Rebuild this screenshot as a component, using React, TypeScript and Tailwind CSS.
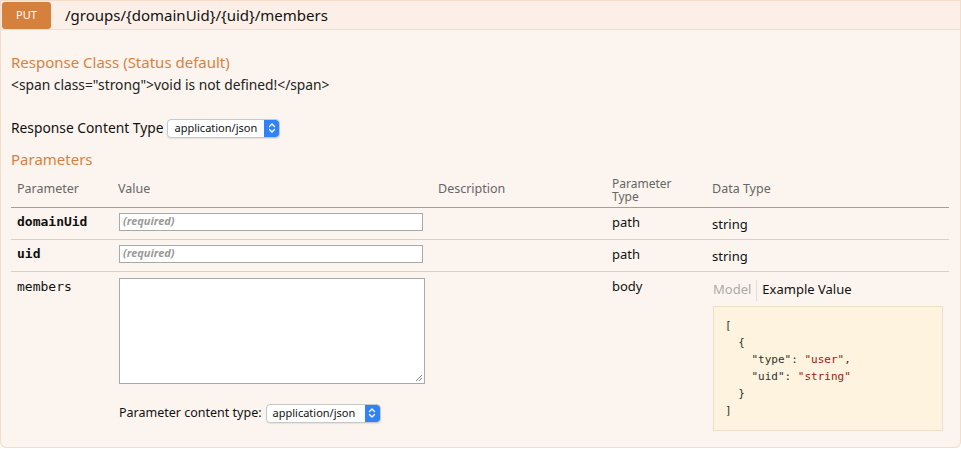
import React from "react";

const sans = { fontFamily: '"Noto Sans", "Open Sans", sans-serif' };
const mono = { fontFamily: '"DejaVu Sans Mono", "Liberation Mono", monospace' };

const SelectBox = ({ width }: { width: string }) => (
  <div
    className={`flex h-[19px] ${width} items-stretch overflow-hidden rounded-[4px] border border-[#c8c8c8] bg-white shadow-[0_1px_1px_rgba(0,0,0,0.08)]`}
  >
    <span className="flex flex-1 items-center pl-[6px] text-[11px] text-[#111]">application/json</span>
    <span className="flex w-[15px] items-center justify-center rounded-r-[3px] bg-[#2f83f6]">
      <svg width="8" height="12" viewBox="0 0 8 12" fill="none" stroke="white" strokeWidth="1.4" strokeLinecap="round" strokeLinejoin="round">
        <path d="M1.5 4.5 L4 2 L6.5 4.5" />
        <path d="M1.5 7.5 L4 10 L6.5 7.5" />
      </svg>
    </span>
  </div>
);

const TextInput = () => (
  <div className="flex h-[18px] w-[304px] items-center border border-[#a9a9a9] bg-white pl-[3px]">
    <span className="text-[11px] font-bold italic text-[#999]">(required)</span>
  </div>
);

export default function App() {
  return (
    <div style={sans} className="h-[449px] w-[961px] bg-white text-[#222]">
      <div className="h-[448px] w-[961px] overflow-hidden rounded-b-[6px] border border-t-[#f7dccb] border-x-[#f4dccb] border-b-[#f4dccb] bg-[#fcf5ef]">
        {/* heading */}
        <div className="flex h-[29px] items-center border-b border-[#f6dccb] bg-[#fcefe8] pl-[1px]">
          <span className="flex h-[27px] w-[49px] items-center justify-center rounded-[3px] bg-[#d5813d] text-[11px] text-white">
            PUT
          </span>
          <span className="ml-[14px] text-[15px] text-[#111]">/groups/{"{domainUid}"}/{"{uid}"}/members</span>
        </div>

        <div className="px-[10px] pt-[22px]">
          <h4 className="text-[15px] leading-[20px] text-[#d8813f]">Response Class (Status default)</h4>
          <p className="mt-[4px] text-[13.8px] leading-[17px] text-[#222]">
            {'<span class="strong">void is not defined!</span>'}
          </p>

          <div className="mt-[25px] flex items-center gap-[4px]">
            <span className="text-[13.8px] text-[#111]">Response Content Type</span>
            <SelectBox width="w-[113px]" />
          </div>

          <h4 className="mt-[10px] text-[15px] leading-[20px] text-[#d8813f]">Parameters</h4>

          <table className="mt-[8px] w-[938px] table-fixed border-collapse text-[13px]">
            <thead>
              <tr className="border-b border-[#a59d96] text-[12.5px] text-[#666]">
                <th className="w-[100px] px-[6px] pb-[8px] text-left align-bottom font-normal">Parameter</th>
                <th className="w-[320px] px-[7px] pb-[8px] text-left align-bottom font-normal">Value</th>
                <th className="w-[174px] px-[7px] pb-[8px] text-left align-bottom font-normal">Description</th>
                <th className="w-[100px] px-[7px] pb-[4px] text-left align-bottom text-[12px] leading-[13px] font-normal">
                  Parameter
                  <br />
                  Type
                </th>
                <th className="px-[7px] pb-[8px] text-left align-bottom font-normal">Data Type</th>
              </tr>
            </thead>
            <tbody>
              <tr className="h-[32px] border-b border-[#d9d2cb]">
                <td style={mono} className="px-[6px] pt-[4px] align-top text-[13px] font-bold text-[#111]">domainUid</td>
                <td className="px-[8px] pt-[5px] align-top"><TextInput /></td>
                <td />
                <td className="px-[7px] pt-[5px] align-top text-[13px] text-[#111]">path</td>
                <td className="px-[7px] pt-[7px] align-top text-[13px] text-[#111]">string</td>
              </tr>
              <tr className="h-[32px] border-b border-[#d9d2cb]">
                <td style={mono} className="px-[6px] pt-[4px] align-top text-[13px] font-bold text-[#111]">uid</td>
                <td className="px-[8px] pt-[5px] align-top"><TextInput /></td>
                <td />
                <td className="px-[7px] pt-[5px] align-top text-[13px] text-[#111]">path</td>
                <td className="px-[7px] pt-[7px] align-top text-[13px] text-[#111]">string</td>
              </tr>
              <tr>
                <td style={mono} className="px-[6px] pt-[5px] align-top text-[13px] text-[#111]">members</td>
                <td className="px-[8px] pt-[6px] align-top">
                  <div className="relative h-[106px] w-[306px] border border-[#a9a9a9] bg-white">
                    <svg className="absolute bottom-[1px] right-[1px]" width="8" height="8" viewBox="0 0 8 8" stroke="#888" strokeWidth="1">
                      <path d="M1 7 L7 1 M4 7 L7 4" />
                    </svg>
                  </div>
                  <div className="mt-[20px] flex items-center gap-[4px]">
                    <span className="text-[12.5px] text-[#111]">Parameter content type:</span>
                    <SelectBox width="w-[115px]" />
                  </div>
                </td>
                <td />
                <td className="px-[7px] pt-[5px] align-top text-[13px] text-[#111]">body</td>
                <td className="px-[8px] pt-[8px] align-top">
                  <div className="flex items-center text-[13px]">
                    <span className="pr-[5px] text-[#aaa]">Model</span>
                    <span className="h-[21px] w-px bg-[#ddd]" />
                    <span className="pl-[5px] text-[#111]">Example Value</span>
                  </div>
                  <div
                    style={mono}
                    className="mt-[5px] h-[125px] w-[230px] whitespace-pre border border-[#eee0c6] bg-[#fdf3de] px-[11px] pt-[10px] text-[11px] leading-[17px] text-[#333]"
                  >
                    {"[\n  {\n    \"type\": "}
                    <span className="text-[#a31515]">"user"</span>
                    {",\n    \"uid\": "}
                    <span className="text-[#a31515]">"string"</span>
                    {"\n  }\n]"}
                  </div>
                </td>
              </tr>
            </tbody>
          </table>
        </div>
      </div>
    </div>
  );
}
